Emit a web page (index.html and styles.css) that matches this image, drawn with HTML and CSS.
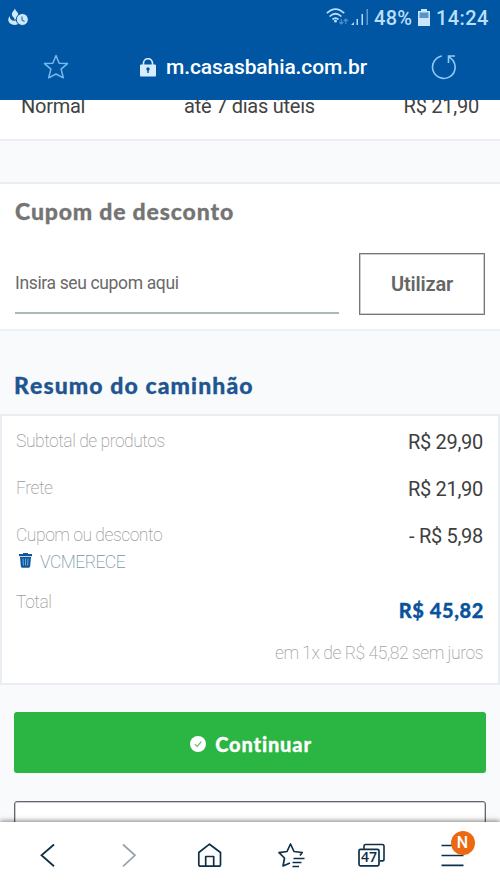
FILE: index.html
```html
<!DOCTYPE html>
<html lang="pt-BR">
<head>
<meta charset="utf-8">
<meta name="viewport" content="width=device-width, initial-scale=1">
<title>Casas Bahia</title>
<link rel="stylesheet" href="styles.css">
</head>
<body>
<header class="browser-top">
  <div class="status">
    <svg class="status-app" width="22" height="20" viewBox="0 0 22 20"><path d="M7 .5C6 3 3.500 4 4 7C4.500 9.500 7 9.500 6.500 12C9.500 11 11.500 7 9.500 4.500C8.500 3 7 2 7 .5Z" fill="#cfe8fb"/><path d="M1.500 8C-.5 11 0 15 3 16C6 17.500 9.500 17 10.500 15.500L9 11.500C7 14 2 13 1.500 8Z" fill="#cfe8fb"/><circle cx="14.300" cy="11.500" r="6" fill="#cfe8fb" stroke="#0056a2" stroke-width="1"/><path d="M14 8.500V12l2.500 1.500" fill="none" stroke="#2872b2" stroke-width="1.200"/></svg>
    <div class="status-right">
      <svg width="44" height="20" viewBox="0 0 44 20"><g fill="none" stroke="#b5dcfa" stroke-width="1.700"><path d="M.8 5.200Q9.500-3 18.200 5.200"/><path d="M3.600 8.500Q9.500 3 15.400 8.500"/><path d="M6.500 11.500Q9.500 8.800 12.500 11.500"/></g><circle cx="9.500" cy="13" r="1.500" fill="#b5dcfa"/><path d="M15.300 11v5m-2-2 2 2 2-2M19.800 16v-5m-2 2 2-2 2 2" fill="none" stroke="#4c91ca" stroke-width="1.200"/><path d="M25 17l3-3v3zM30.500 11h1.500v6h-1.500zM35.500 6h1.500v11h-1.500z" fill="#b5dcfa"/><path d="M40.500 1H42v16h-1.500z" fill="#5b9bd1"/></svg>
      <span class="battery-text">48%</span>
      <svg class="battery" width="12" height="17" viewBox="0 0 12 17"><path d="M3 0h6v2h3v15H0V2h3z" fill="#cbe6fa"/><path d="M1.500 3.500h9V9h-9z" fill="#5994c8"/></svg>
      <span class="clock">14:24</span>
    </div>
  </div>
  <div class="address">
    <svg width="26" height="26" viewBox="0 0 26 26"><path d="M13 1.500l3.200 7.800 8.300.3-6.400 5.500 2.200 8.700-7.300-3.800-7.300 3.800 2.200-8.700L1.500 9.600l8.300-.3z" fill="none" stroke="#78b8ef" stroke-width="1.500" stroke-linejoin="round"/></svg>
    <div class="url">
      <svg width="16" height="19" viewBox="0 0 16 19"><path d="M3.500 7V5.200a4.500 4.500 0 0 1 9 0V7" fill="none" stroke="#d7ecfd" stroke-width="1.600"/><rect y="6.500" width="16" height="12" rx="1" fill="#d7ecfd"/><circle cx="8" cy="11" r="1.700" fill="#0054a0"/><path d="M7.300 11h1.400v4H7.300z" fill="#0054a0"/></svg>
      <span>m.casasbahia.com.br</span>
    </div>
    <svg width="26" height="26" viewBox="0 0 26 26"><path d="M10.800 2A11.300 11.300 0 1 0 22 6.500M24 2h-6.500v7M17.800 2.200l5 5" fill="none" stroke="#91c8f5" stroke-width="1.600"/></svg>
  </div>
</header>
<main class="page">
  <section class="shipping"><span>Normal</span><span>até 7 dias úteis</span><span class="amount">R$ 21,90</span></section>
  <section class="coupon">
    <h2>Cupom de desconto</h2>
    <div class="coupon-form">
      <div class="coupon-field">Insira seu cupom aqui</div>
      <button class="apply">Utilizar</button>
    </div>
  </section>
  <h2 class="summary-title">Resumo do caminhão</h2>
  <section class="summary">
    <div class="row"><span>Subtotal de produtos</span><span class="price">R$ 29,90</span></div>
    <div class="row"><span>Frete</span><span class="price">R$ 21,90</span></div>
    <div class="row discount"><span>Cupom ou desconto</span><span class="price">- R$ 5,98</span></div>
    <div class="code">
      <svg width="13" height="15" viewBox="0 0 13 15"><path d="M4 1V0h5v1h4v2.200H0V1zM1 4h11l-.8 9q-.1 1.700-1.500 1.700H3.300q-1.400 0-1.500-1.700z" fill="#0b589f"/><path d="M4 5.500l.4 7M6.500 5.500v7M9 5.500l-.4 7" stroke="#8fbbe0" stroke-width=".8"/></svg>
      <span>VCMERECE</span>
    </div>
    <div class="row total"><span>Total</span><strong>R$ 45,82</strong></div>
    <p class="installments">em 1x de R$ 45,82 sem juros</p>
  </section>
  <button class="continue">
    <svg width="16" height="16" viewBox="0 0 16 16"><circle cx="8" cy="8" r="8" fill="#fff"/><path d="M4.800 8.200l2.300 2.200 4.200-4.700" fill="none" stroke="#55b96b" stroke-width="1.100"/></svg>
    <span>Continuar</span>
  </button>
  <div class="secondary"></div>
</main>
<nav class="toolbar">
  <svg width="28" height="28" viewBox="0 0 28 28"><path d="M20 3.500L7.500 14.300l12.500 11" fill="none" stroke="#0d3048" stroke-width="1.800"/></svg>
  <svg width="28" height="28" viewBox="0 0 28 28"><path d="M8 3.500l12 10.800L8 25.300" fill="none" stroke="#98a1ac" stroke-width="1.700"/></svg>
  <svg width="28" height="28" viewBox="0 0 28 28"><path d="M2.800 11.500L13.500 3.200l11 8.300v12q0 1.700-1.700 1.700H4.500q-1.700 0-1.700-1.700zM9.700 25v-9.500h8V25" fill="none" stroke="#0d3048" stroke-width="1.700" stroke-linejoin="round"/></svg>
  <svg width="28" height="28" viewBox="0 0 28 28"><path d="M23 14.500l2.200-3-8.200-1L13.500 3 10 10.500l-8 1.200 5.500 5.300L6 25l7-3" fill="none" stroke="#0d3048" stroke-width="1.700" stroke-linejoin="round"/><path d="M16.500 17.500h11M15.500 21.500h9M15.500 25.500h6.500" stroke="#0d3048" stroke-width="1.600"/></svg>
  <svg width="28" height="28" viewBox="0 0 28 28"><path d="M6 8V5.200q0-1.700 1.700-1.700h16.600q1.700 0 1.700 1.700v13q0 1.700-1.700 1.700H22" fill="none" stroke="#0d3048" stroke-width="1.600"/><rect x="1" y="8.300" width="20" height="16.500" rx="1.500" fill="#fff" stroke="#0d3048" stroke-width="1.700"/><text class="tab-count" x="11" y="21.300" text-anchor="middle">47</text></svg>
  <div class="menu">
    <svg width="28" height="28" viewBox="0 0 28 28"><path d="M2.500 4.500h22M2.500 14.500h22M2.500 24.300h22" stroke="#0d3048" stroke-width="1.700"/></svg>
    <span class="badge">N</span>
  </div>
</nav>
</body>
</html>
```
FILE: styles.css
```css
* { box-sizing: border-box; }
body { margin: 0; width: 500px; height: 889px; overflow: hidden; display: flex; flex-direction: column; font-family: Roboto, sans-serif; background: #f8fafc; }
svg { display: block; flex: none; }
h2, p { margin: 0; }
button { font-family: inherit; padding: 0; }
.browser-top { height: 100px; flex: none; background: #0056a2; }
.status { height: 34px; display: flex; justify-content: space-between; align-items: flex-start; padding: 8px 12px 0 8px; }
.status-right { display: flex; color: #b9dffb; font-size: 20px; font-weight: 500; line-height: 20px; }
.battery-text { margin-left: 4px; width: 41px; letter-spacing: .3px; }
.battery { margin: 1px 6px 0 3px; }
.clock { width: 52px; letter-spacing: .4px; }
.address { height: 66px; display: flex; justify-content: space-between; align-items: center; padding: 0 43px; }
.url { display: flex; align-items: center; gap: 10px; margin-left: 7px; color: #fff; font-size: 21px; font-weight: 500; letter-spacing: -.1px; }
.page { flex: 1; min-height: 0; overflow: hidden; }
.shipping { height: 41px; display: grid; grid-template-columns: 163px 1fr auto; padding: 0 21px; background: #fff; border-bottom: 2px solid #ebeef4; font-size: 20px; line-height: 13px; letter-spacing: -.25px; color: #424242; }
.coupon { height: 149px; margin-top: 41px; padding: 0 15px; background: #fff; border-top: 2px solid #ebeef1; border-bottom: 2px solid #e9f0f7; }
h2 { font-family: Lato, sans-serif; font-weight: 900; font-size: 23px; font-kerning: none; -webkit-text-stroke: .3px currentColor; }
.coupon h2 { color: #747474; line-height: 28px; padding-top: 13px; letter-spacing: .8px; }
.coupon-form { display: flex; justify-content: space-between; margin-top: 28px; }
.coupon-field { width: 324px; height: 61px; line-height: 60px; font-size: 17.5px; letter-spacing: -.36px; color: #696969; border-bottom: 2px solid #adb8b6; }
.apply { width: 126px; height: 62px; background: #fff; border: 1px solid #777; box-shadow: inset 0 0 0 1px #ccc; font-size: 20px; font-weight: 600; letter-spacing: -.2px; color: #666; }
.summary-title { height: 83px; padding: 39px 14px 0; line-height: 30px; letter-spacing: 1.1px; color: #20558f; }
.summary { height: 271px; padding: 12px 15px 0; background: #fff; border: 2px solid #eaeef2; }
.row { height: 47px; display: flex; justify-content: space-between; font-size: 17.5px; font-weight: 300; line-height: 26px; color: #a0a0a0; }
.row span:first-child { font-weight: 200; letter-spacing: -.48px; margin-left: -1px; }
.row .price { font-size: 20px; font-weight: 400; line-height: 28px; letter-spacing: -.3px; color: #3e3e3e; }
.row.discount { height: 27px; }
.code { display: flex; gap: 8px; padding-left: 2px; height: 40px; line-height: 26px; font-size: 17.5px; font-weight: 200; letter-spacing: -.55px; color: #7595a8; }
.code svg { margin-top: 4px; }
.total strong { font-family: Lato, sans-serif; font-size: 20px; font-weight: 900; line-height: 42px; letter-spacing: .6px; margin-right: -1px; color: #08539b; -webkit-text-stroke: .3px currentColor; }
.installments { margin-top: 4px; text-align: right; font-size: 17.5px; font-weight: 200; line-height: 26px; letter-spacing: -.45px; color: #a2a2a2; }
.continue { display: flex; align-items: center; justify-content: center; gap: 9px; width: 472px; height: 61px; margin: 27px 14px 0; background: #2bb542; border: 0; border-radius: 3px; color: #fff; font: 900 20px Lato, sans-serif; letter-spacing: .85px; font-variant-ligatures: none; -webkit-text-stroke: .3px currentColor; padding: 3px 0 0 2px; }
.secondary { height: 61px; margin: 28px 14px 0; background: #fff; border: 1px solid #65656f; box-shadow: inset 0 0 0 1px #ccccd0; border-radius: 3px; }
.toolbar { height: 67px; flex: none; display: grid; grid-template-columns: repeat(6, 81px); padding: 0 7px 2px; place-items: center; background: #fff; box-shadow: 0 -1px 5px rgba(0,0,0,.5); z-index: 1; }
.tab-count { font: 600 14px "Open Sans", sans-serif; fill: #0d3048; }
.menu { position: relative; }
.badge { position: absolute; left: 12px; top: -10px; width: 24px; height: 24px; border-radius: 50%; background: #ec6914; color: #fff; font-size: 16px; font-weight: 500; line-height: 24px; text-align: center; }
```
